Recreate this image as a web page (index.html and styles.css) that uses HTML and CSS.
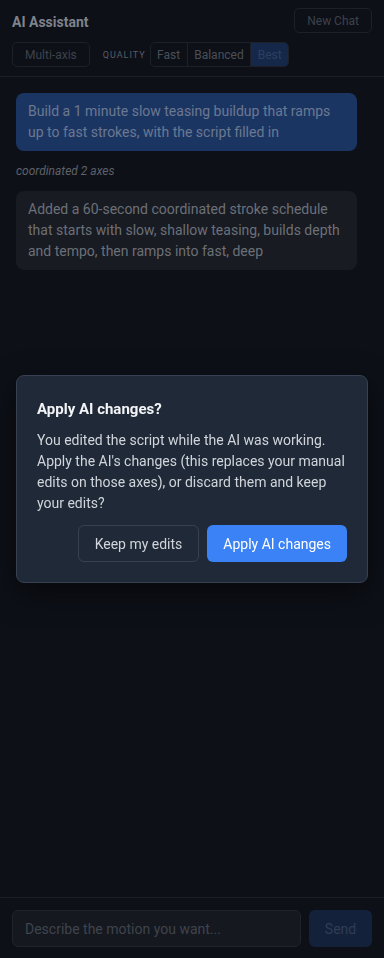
FILE: index.html
```html
<!DOCTYPE html>
<html lang="en">
<head>
<meta charset="utf-8">
<title>AI Assistant</title>
<link rel="stylesheet" href="styles.css">
</head>
<body>
<div class="app">
  <header class="header">
    <div class="header-top">
      <h1 class="title">AI Assistant</h1>
      <button class="ghost-btn">New Chat</button>
    </div>
    <div class="header-controls">
      <button class="ghost-btn">Multi-axis</button>
      <span class="quality-label">QUALITY</span>
      <div class="segmented">
        <button class="seg">Fast</button>
        <button class="seg">Balanced</button>
        <button class="seg seg-active">Best</button>
      </div>
    </div>
  </header>

  <main class="messages">
    <div class="msg msg-user">Build a 1 minute slow teasing buildup that ramps up to fast strokes, with the script filled in</div>
    <div class="meta">coordinated 2 axes</div>
    <div class="msg msg-ai">Added a 60-second coordinated stroke schedule that starts with slow, shallow teasing, builds depth and tempo, then ramps into fast, deep</div>
  </main>

  <footer class="composer">
    <input class="composer-input" type="text" placeholder="Describe the motion you want...">
    <button class="send-btn">Send</button>
  </footer>
</div>

<div class="overlay">
  <div class="dialog">
    <h2 class="dialog-title">Apply AI changes?</h2>
    <p class="dialog-body">You edited the script while the AI was working. Apply the AI's changes (this replaces your manual edits on those axes), or discard them and keep your edits?</p>
    <div class="dialog-actions">
      <button class="btn-secondary">Keep my edits</button>
      <button class="btn-primary">Apply AI changes</button>
    </div>
  </div>
</div>
</body>
</html>
```

FILE: styles.css
```css
* { box-sizing: border-box; }
html, body {
  margin: 0;
  padding: 0;
  height: 100%;
}
body {
  background: #0d1017;
  font-family: Roboto, "Noto Sans", Arial, sans-serif;
  color: #6c7078;
}
button, input {
  font-family: inherit;
}
.app {
  height: 958px;
  display: flex;
  flex-direction: column;
}
.header {
  padding: 8px 12px 9px 12px;
  border-bottom: 1px solid #1a1e27;
  display: flex;
  flex-direction: column;
  gap: 9px;
}
.header-top {
  display: flex;
  justify-content: space-between;
  align-items: center;
}
.title {
  margin: 0;
  padding-top: 2px;
  font-size: 14px;
  font-weight: 700;
  color: #7e838c;
}
.ghost-btn {
  height: 25px;
  padding: 0 12px;
  background: transparent;
  border: 1px solid #1c2029;
  border-radius: 5px;
  color: #3d424b;
  font-size: 12px;
}
.header-controls {
  display: flex;
  align-items: center;
}
.quality-label {
  margin-left: 13px;
  margin-right: 4px;
  font-size: 9px;
  letter-spacing: 1px;
  color: #575c66;
}
.segmented {
  display: flex;
  height: 25px;
  border: 1px solid #1c2029;
  border-radius: 5px;
  overflow: hidden;
}
.seg {
  background: transparent;
  border: 0;
  border-left: 1px solid #1c2029;
  padding: 0 6.5px;
  font-size: 12px;
  color: #4a4f58;
}
.seg:first-child { border-left: 0; }
.seg-active {
  background: #15284a;
  color: #2c3f62;
}
.messages {
  flex: 1;
  padding: 16px 27px 0 16px;
  display: flex;
  flex-direction: column;
}
.msg {
  border-radius: 8px;
  padding: 8px 12px;
  font-size: 14px;
  line-height: 21px;
}
.msg-user {
  background: #1b3563;
  color: #6b7890;
}
.meta {
  margin: 13px 0 12px;
  font-size: 12px;
  line-height: 15px;
  font-style: italic;
  color: #5d6168;
}
.msg-ai {
  background: #181b22;
  color: #6c7078;
}
.composer {
  border-top: 1px solid #1a1e27;
  padding: 12px 12px 11px;
  display: flex;
  gap: 8px;
}
.composer-input {
  flex: 1;
  height: 37px;
  background: #15181f;
  border: 1px solid #1f232b;
  border-radius: 6px;
  padding: 0 12px;
  font-size: 14px;
  color: #6c7078;
  outline: none;
}
.composer-input::placeholder { color: #3f444d; }
.send-btn {
  width: 63px;
  height: 37px;
  background: #13213b;
  border: 0;
  border-radius: 6px;
  color: #2f3d55;
  font-size: 14px;
}
.overlay {
  position: fixed;
  inset: 0;
  display: flex;
  align-items: center;
  justify-content: center;
  padding: 0 16px;
}
.dialog {
  width: 100%;
  background: #1f2937;
  border: 1px solid #374151;
  border-radius: 8px;
  padding: 22px 20px 20px 20px;
  box-shadow: 0 10px 30px rgba(0,0,0,0.5);
}
.dialog-title {
  margin: 0 0 10px;
  font-size: 15px;
  font-weight: 700;
  color: #f3f4f6;
  line-height: 22px;
}
.dialog-body {
  margin: 0 0 11px;
  font-size: 14px;
  line-height: 21px;
  color: #d1d5db;
}
.dialog-actions {
  display: flex;
  justify-content: flex-end;
  gap: 8px;
}
.btn-secondary {
  height: 37px;
  padding: 0 16px;
  background: transparent;
  border: 1px solid #374151;
  border-radius: 6px;
  color: #d1d5db;
  font-size: 14px;
}
.btn-primary {
  height: 37px;
  padding: 0 16px;
  background: #3b82f6;
  border: 0;
  border-radius: 6px;
  color: #ffffff;
  font-size: 14px;
}
```
